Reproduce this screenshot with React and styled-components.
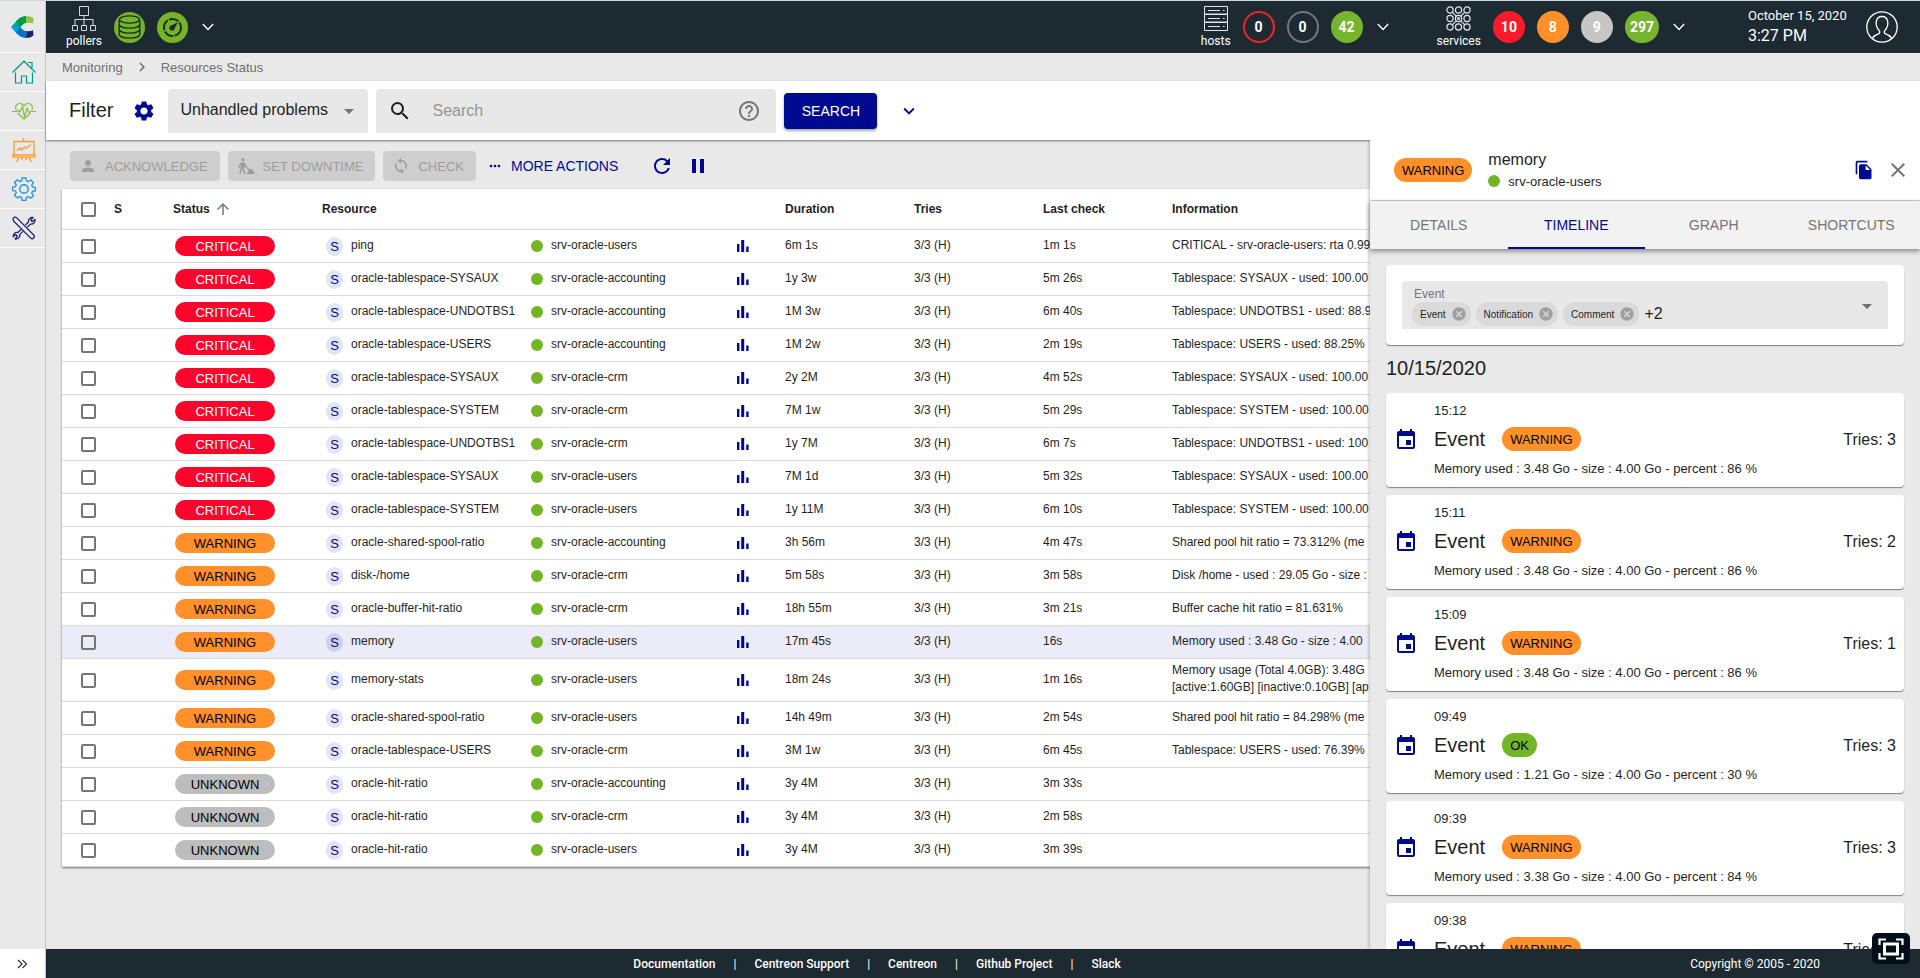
import { Fragment } from "react";
import styled, { createGlobalStyle, css } from "styled-components";
import {
  MdArrowDropDown,
  MdArrowUpward,
  MdCancel,
  MdChevronRight,
  MdClose,
  MdEvent,
  MdExpandMore,
  MdFileCopy,
  MdHelpOutline,
  MdMoreHoriz,
  MdPause,
  MdPerson,
  MdRefresh,
  MdSearch,
  MdSettings,
  MdSync,
} from "react-icons/md";

const NAVY = "#000a91";
const DARK = "#1e2a32";
const GREEN = "#74b526";

const statusColors = {
  CRITICAL: { bg: "#ff042b", fg: "#fff" },
  WARNING: { bg: "#ff902a", fg: "#000" },
  UNKNOWN: { bg: "#bdbdbd", fg: "#000" },
  OK: { bg: GREEN, fg: "#000" },
};

const resources = [
  ["CRITICAL", "ping", "srv-oracle-users", "6m 1s", "1m 1s", "CRITICAL - srv-oracle-users: rta 0.99"],
  ["CRITICAL", "oracle-tablespace-SYSAUX", "srv-oracle-accounting", "1y 3w", "5m 26s", "Tablespace: SYSAUX - used: 100.00"],
  ["CRITICAL", "oracle-tablespace-UNDOTBS1", "srv-oracle-accounting", "1M 3w", "6m 40s", "Tablespace: UNDOTBS1 - used: 88.9"],
  ["CRITICAL", "oracle-tablespace-USERS", "srv-oracle-accounting", "1M 2w", "2m 19s", "Tablespace: USERS - used: 88.25%"],
  ["CRITICAL", "oracle-tablespace-SYSAUX", "srv-oracle-crm", "2y 2M", "4m 52s", "Tablespace: SYSAUX - used: 100.00"],
  ["CRITICAL", "oracle-tablespace-SYSTEM", "srv-oracle-crm", "7M 1w", "5m 29s", "Tablespace: SYSTEM - used: 100.00"],
  ["CRITICAL", "oracle-tablespace-UNDOTBS1", "srv-oracle-crm", "1y 7M", "6m 7s", "Tablespace: UNDOTBS1 - used: 100"],
  ["CRITICAL", "oracle-tablespace-SYSAUX", "srv-oracle-users", "7M 1d", "5m 32s", "Tablespace: SYSAUX - used: 100.00"],
  ["CRITICAL", "oracle-tablespace-SYSTEM", "srv-oracle-users", "1y 11M", "6m 10s", "Tablespace: SYSTEM - used: 100.00"],
  ["WARNING", "oracle-shared-spool-ratio", "srv-oracle-accounting", "3h 56m", "4m 47s", "Shared pool hit ratio = 73.312% (me"],
  ["WARNING", "disk-/home", "srv-oracle-crm", "5m 58s", "3m 58s", "Disk /home - used : 29.05 Go - size :"],
  ["WARNING", "oracle-buffer-hit-ratio", "srv-oracle-crm", "18h 55m", "3m 21s", "Buffer cache hit ratio = 81.631%"],
  ["WARNING", "memory", "srv-oracle-users", "17m 45s", "16s", "Memory used : 3.48 Go - size : 4.00"],
  ["WARNING", "memory-stats", "srv-oracle-users", "18m 24s", "1m 16s", "Memory usage (Total 4.0GB): 3.48G\n[active:1.60GB] [inactive:0.10GB] [ap"],
  ["WARNING", "oracle-shared-spool-ratio", "srv-oracle-users", "14h 49m", "2m 54s", "Shared pool hit ratio = 84.298% (me"],
  ["WARNING", "oracle-tablespace-USERS", "srv-oracle-crm", "3M 1w", "6m 45s", "Tablespace: USERS - used: 76.39%"],
  ["UNKNOWN", "oracle-hit-ratio", "srv-oracle-accounting", "3y 4M", "3m 33s", ""],
  ["UNKNOWN", "oracle-hit-ratio", "srv-oracle-crm", "3y 4M", "2m 58s", ""],
  ["UNKNOWN", "oracle-hit-ratio", "srv-oracle-users", "3y 4M", "3m 39s", ""],
];

const events = [
  { time: "15:12", status: "WARNING", tries: 3, used: "3.48", percent: 86 },
  { time: "15:11", status: "WARNING", tries: 2, used: "3.48", percent: 86 },
  { time: "15:09", status: "WARNING", tries: 1, used: "3.48", percent: 86 },
  { time: "09:49", status: "OK", tries: 3, used: "1.21", percent: 30 },
  { time: "09:39", status: "WARNING", tries: 3, used: "3.38", percent: 84 },
  { time: "09:38", status: "WARNING", tries: 2, used: "3.38", percent: 84 },
];

const GlobalStyle = createGlobalStyle`
  * {
    box-sizing: border-box;
  }

  body {
    margin: 0;
    font-family: "Liberation Sans", Arial, sans-serif;
    color: #1f1f1f;
    background: #e9e9e9;
  }

  button, input, select {
    margin: 0;
    font-family: inherit;
  }

  svg {
    flex-shrink: 0;
  }
`;

const bareButton = css`
  display: flex;
  align-items: center;
  justify-content: center;
  padding: 0;
  border: none;
  background: none;
  color: ${(props) => props.$color || "inherit"};
  cursor: pointer;
`;

const Layout = styled.div`
  display: flex;
  height: 100vh;
  border-top: 1px solid #cdd6db;
  overflow: hidden;
`;

/* ---------- sidebar ---------- */

const Sidebar = styled.nav`
  display: flex;
  flex-direction: column;
  width: 46px;
  flex-shrink: 0;
  border-right: 1px solid #c6c6c6;
  background: #e9e9e9;
`;

const Logo = styled.a`
  display: flex;
  align-items: center;
  justify-content: center;
  height: 52px;
  border-bottom: 1px solid #fff;
`;

const MenuLink = styled.a`
  display: flex;
  align-items: center;
  justify-content: center;
  height: 39px;
  padding-left: 2px;
  border-bottom: 1px solid #fff;
  color: ${(props) => props.$color};
`;

const ExpandButton = styled.button`
  ${bareButton}
  height: 29px;
  margin-top: auto;
  background: #fff;
`;

/* ---------- header ---------- */

const Page = styled.div`
  display: flex;
  flex-direction: column;
  flex: 1;
  min-width: 0;
`;

const Header = styled.header`
  display: flex;
  align-items: center;
  height: 52px;
  flex-shrink: 0;
  padding: 0 22px 0 20px;
  background: ${DARK};
  color: #fff;
  font-family: Roboto, sans-serif;
`;

const HeaderGroup = styled.div`
  display: flex;
  align-items: center;
  gap: 12px;
  margin-left: ${(props) => props.$push || "0"};
`;

const HeaderLabel = styled.a`
  display: flex;
  flex-direction: column;
  align-items: center;
  gap: 3px;
  font-size: 12px;
  line-height: 14px;
  color: #fff;
  text-decoration: none;
`;

const PollerBadges = styled.div`
  display: flex;
  align-items: center;
  gap: 12px;
`;

const Counter = styled.a`
  display: flex;
  align-items: center;
  justify-content: center;
  min-width: 32px;
  height: 32px;
  padding: 0 3px;
  border: 2px solid ${(props) => props.$color};
  border-radius: 17px;
  background: ${(props) => (props.$outlined ? "transparent" : props.$color)};
  font-size: 14px;
  font-weight: bold;
  color: #fff;
  text-decoration: none;
`;

const ChevronButton = styled.button`
  ${bareButton}
  width: 16px;
  height: 24px;
`;

const Clock = styled.div`
  display: flex;
  flex-direction: column;
  margin-left: 61px;
  width: 118px;
  font-size: 13px;
  line-height: 18px;

  strong {
    font-size: 16px;
    font-weight: normal;
    line-height: 22px;
  }
`;

const UserButton = styled.button`
  ${bareButton}
`;

/* ---------- breadcrumb + filters ---------- */

const Breadcrumb = styled.nav`
  display: flex;
  align-items: center;
  gap: 10px;
  height: 28px;
  flex-shrink: 0;
  padding: 0 16px;
  font-size: 13px;
  color: #6f6f6f;

  a {
    color: inherit;
    text-decoration: none;
  }
`;

const FilterBar = styled.form`
  position: relative;
  z-index: 1;
  display: flex;
  align-items: center;
  gap: 8px;
  height: 59px;
  flex-shrink: 0;
  padding: 0 23px;
  background: #fff;
  box-shadow: 0 1px 2px rgba(0, 0, 0, 0.5);
`;

const FilterTitle = styled.h1`
  margin: 0 7px 0 0;
  font-size: 20px;
  font-weight: normal;
`;

const IconButton = styled.button`
  ${bareButton}
  width: ${(props) => props.$size || 24}px;
  height: ${(props) => props.$size || 24}px;
`;

const SelectBox = styled.label`
  display: flex;
  align-items: center;
  width: 200px;
  height: 44px;
  padding-right: 7px;
  border-radius: 4px 4px 0 0;
  background: #e8e8e8;
  color: #757575;

  select {
    flex: 1;
    min-width: 0;
    height: 100%;
    padding: 0 0 2px 12px;
    border: none;
    background: none;
    appearance: none;
    font-size: 16px;
    color: #1f1f1f;
  }
`;

const SearchBox = styled.label`
  display: flex;
  align-items: center;
  gap: 20px;
  width: 400px;
  height: 44px;
  padding: 0 15px 0 12px;
  border-radius: 4px 4px 0 0;
  background: #e8e8e8;

  input {
    flex: 1;
    min-width: 0;
    padding: 0;
    border: none;
    outline: none;
    background: none;
    font-size: 16px;
  }

  input::placeholder {
    color: #959595;
  }
`;

const SearchButton = styled.button`
  width: 93px;
  height: 36px;
  border: none;
  border-radius: 4px;
  background: ${NAVY};
  box-shadow: 0 2px 3px rgba(0, 0, 0, 0.35);
  font-size: 14px;
  font-weight: 500;
  color: #fff;
`;

/* ---------- listing ---------- */

const Main = styled.main`
  position: relative;
  flex: 1;
  min-height: 0;
  overflow: hidden;
`;

const Listing = styled.section`
  padding: 11px 16px 0;
`;

const Actions = styled.div`
  display: flex;
  align-items: center;
  gap: 8px;
  height: 30px;
  margin: 0 0 8px 8px;
`;

const ActionButton = styled.button`
  display: flex;
  align-items: center;
  gap: 8px;
  height: 30px;
  padding: 0 12px 0 9px;
  border: none;
  border-radius: 4px;
  background: #cecece;
  font-size: 13px;
  color: #9d9d9d;
`;

const MoreButton = styled.button`
  ${bareButton}
  gap: 8px;
  margin: 0 24px 0 3px;
  font-size: 14px;
  color: ${NAVY};
`;

const IconGroup = styled.div`
  display: flex;
  gap: ${(props) => props.$gap}px;
`;

const Table = styled.table`
  width: 100%;
  table-layout: fixed;
  border-collapse: separate;
  border-spacing: 0;
  background: #fff;
  box-shadow: 0 1px 2px rgba(0, 0, 0, 0.5);
  font-size: 12px;

  th,
  td {
    padding: 0;
    border-bottom: 1px solid #d9d9d9;
    text-align: left;
    white-space: nowrap;
  }

  th {
    height: 41px;
  }
`;

const Row = styled.tr`
  background: ${(props) => (props.$selected ? "#ebecf7" : "#fff")};

  td {
    height: 33px;
  }
`;

const CellText = styled.div`
  padding-bottom: 2px;
`;

const Checkbox = styled.input`
  display: block;
  width: 15px;
  height: 15px;
  margin: 1px 0 0 19px;
  border: 2px solid #757575;
  border-radius: 2px;
  appearance: none;
`;

const SortButton = styled.button`
  ${bareButton}
  gap: 4px;
  font-size: 12px;
  font-weight: bold;

  svg {
    color: #757575;
  }
`;

const Chip = styled.span`
  display: inline-flex;
  align-items: center;
  justify-content: center;
  width: ${(props) => (props.$wide ? "100px" : "auto")};
  height: ${(props) => (props.$wide ? 20 : 24)}px;
  margin-left: ${(props) => (props.$wide ? 2 : 0)}px;
  padding: 0 8px;
  border-radius: 12px;
  background: ${(props) => statusColors[props.$status].bg};
  color: ${(props) => statusColors[props.$status].fg};
  font-size: 13px;
`;

const CenteredCell = styled.div`
  display: flex;
  align-items: center;
`;

const ServiceBadge = styled.span`
  display: flex;
  align-items: center;
  justify-content: center;
  width: 17px;
  height: 19px;
  margin: 0 8px 0 4px;
  border-radius: 50%;
  background: ${(props) => (props.$selected ? "#cdd0ea" : "#e2e4f4")};
  font-size: 13px;
  color: ${NAVY};
`;

const Dot = styled.span`
  width: 12px;
  height: 12px;
  margin-right: 8px;
  border-radius: 50%;
  background: ${GREEN};
`;

const Information = styled.div`
  padding: 3px 0 5px;
  line-height: 17px;
  white-space: pre;
`;

/* ---------- details drawer ---------- */

const Drawer = styled.aside`
  position: absolute;
  top: 0;
  right: 0;
  bottom: 0;
  z-index: 2;
  display: flex;
  flex-direction: column;
  width: 550px;
  background: #e9e9e9;
  box-shadow: -1px 0 3px rgba(0, 0, 0, 0.25);
`;

const DrawerHeader = styled.div`
  display: flex;
  align-items: center;
  gap: 16px;
  height: 61px;
  flex-shrink: 0;
  padding: 0 10px 0 24px;
  border-bottom: 1px solid #cfcfcf;
  background: #fff;
`;

const DrawerTitle = styled.div`
  flex: 1;

  h2 {
    margin: 0;
    font-size: 16px;
    font-weight: normal;
    line-height: 22px;
  }
`;

const DrawerParent = styled.div`
  display: flex;
  align-items: center;
  font-size: 13px;
  line-height: 21px;
`;

const Tabs = styled.div`
  display: grid;
  grid-template-columns: repeat(4, 1fr);
  height: 48px;
  flex-shrink: 0;
  background: #f2f2f2;
  box-shadow: 0 2px 5px rgba(0, 0, 0, 0.45);
`;

const Tab = styled.button`
  padding: 2px 0 0;
  border: none;
  border-bottom: 2px solid ${(props) => (props.$active ? NAVY : "transparent")};
  background: none;
  font-size: 14px;
  color: ${(props) => (props.$active ? NAVY : "#757575")};
`;

const Timeline = styled.div`
  display: flex;
  flex-direction: column;
  gap: 8px;
  flex: 1;
  min-height: 0;
  padding: 16px 16px 0;
  overflow: hidden;
`;

const Card = styled.article`
  flex-shrink: 0;
  border-radius: 4px;
  background: #fff;
  box-shadow: 0 1px 1px rgba(0, 0, 0, 0.45);
`;

const FilterCard = styled(Card)`
  padding: 16px;
`;

const EventFilter = styled.div`
  display: flex;
  align-items: center;
  justify-content: space-between;
  height: 48px;
  padding: 2px 9px 0 10px;
  border-radius: 4px 4px 0 0;
  background: #e8e8e8;
  color: #757575;
`;

const EventFilterLabel = styled.div`
  padding-left: 2px;
  font-size: 12px;
  line-height: 16px;
`;

const ChipList = styled.div`
  display: flex;
  align-items: center;
  gap: 5px;
  font-size: 16px;
  color: #1f1f1f;
`;

const FilterChip = styled.span`
  display: flex;
  align-items: center;
  gap: 5px;
  height: 24px;
  padding: 0 4px 0 8px;
  border-radius: 12px;
  background: #dadada;
  font-size: 10px;
`;

const DayTitle = styled.h3`
  margin: 0;
  padding: 4px 0 5px;
  font-size: 20px;
  font-weight: normal;
  line-height: 23px;
`;

const EventCard = styled(Card)`
  display: grid;
  grid-template-columns: 40px 1fr auto;
  align-items: center;
  height: 94px;
  padding: 4px 8px;
  color: ${NAVY};
`;

const EventBody = styled.div`
  display: grid;
  grid-template-rows: 26px 32px 26px;
  align-items: center;
  padding-bottom: 2px;
  font-size: 13px;
  color: #1f1f1f;
`;

const EventTitle = styled.div`
  display: flex;
  align-items: center;
  gap: 17px;
  font-size: 20px;
`;

const Tries = styled.div`
  font-size: 16px;
  color: #1f1f1f;
`;

/* ---------- footer ---------- */

const Footer = styled.footer`
  display: flex;
  align-items: center;
  height: 29px;
  flex-shrink: 0;
  padding: 1px 100px 0 18px;
  background: ${DARK};
  color: #fff;
  font-family: Roboto, sans-serif;
  font-size: 12px;
`;

const FooterLinks = styled.div`
  display: flex;
  justify-content: center;
  gap: 18px;
  flex: 1;

  a {
    font-weight: 500;
    color: inherit;
    text-decoration: none;
  }
`;

const FullscreenButton = styled.button`
  ${bareButton}
  position: fixed;
  right: 10px;
  bottom: 14px;
  z-index: 3;
  width: 38px;
  height: 31px;
  border-radius: 5px;
  background: #040e18;
  color: #fff;
`;

/* ---------- drawings ---------- */

const LogoIcon = () => (
  <svg width="23" height="22" viewBox="0 0 23 22">
    <path d="M0 11 6 4.5l6 3.2L9.5 11z" fill="#00a3a0" />
    <path d="M5 5.5C7.500 2 11 .2 15 0l.5 7c-2.500.2-4.500 1.500-6 4z" fill="#009a44" />
    <path d="M15 0c3 0 5.500.8 7.500 2.300L22 7.500c-2-.8-4-.9-6.500-.5z" fill="#8cc63f" />
    <path d="M0 11h9.500l1.500 5-5.500 1.500z" fill="#009fdf" />
    <path d="M5 16.500 9.500 11c1.200 2.500 3.200 3.800 6 4L15 22c-4-.2-7.500-2-10-5.500z" fill="#0072ce" />
    <path d="M15 22l.5-7c2.500.3 4.500.2 6.500-.8l.5 5.300C20.500 21.200 18 22 15 22z" fill="#1e2171" />
  </svg>
);

const HomeIcon = () => (
  <svg width="24" height="24" viewBox="0 0 24 24" fill="none" stroke="currentColor" strokeWidth="1.2">
    <path d="M.5 12.5 12 1.2l11.500 11.300M16 2.500h4v5.500M3.500 12.500v10.500h6v-7h5v7h6V12.500" />
  </svg>
);

const HeartIcon = () => (
  <svg width="24" height="24" viewBox="0 0 24 24" fill="none" stroke="currentColor" strokeWidth="1.2" strokeLinejoin="round">
    <path d="M0 12.500h4.500l1.500-1.200 2 1.700 2.500-5.500 2 10.500 2.500-9 2 4.500 1.500-1h5.500" />
    <path d="M4 11C2.500 7 5 4.300 8.200 4.500c1.800.1 3.200 1.300 3.800 2.600.6-1.300 2-2.500 3.800-2.600C19 4.300 21.500 7 20 11M5.500 14 12 20l6.500-6" />
  </svg>
);

const BoardIcon = () => (
  <svg width="24" height="24" viewBox="0 0 24 24" fill="none" stroke="currentColor" strokeWidth="1.3">
    <path d="M2 3.500h20v13.500H2zM1 17h22v2.200H1zM11.500 0v3.500M7 19.200 4.500 24M17 19.200l2.500 4.800M10.500 19.200 9.500 22M13.500 19.200l1 2.800" />
    <path d="m5 12.500 3-2.500 1.500 2 3-3 1.500 1.500 5-4" />
  </svg>
);

const CogIcon = () => (
  <svg width="24" height="24" viewBox="0 0 24 24" fill="none" stroke="currentColor" strokeWidth="1.4" strokeLinejoin="round">
    <path
      d="M10 .8h4l.6 3.200 2 .8 2.700-1.800 2.800 2.800-1.900 2.600.9 2 3.100.6v3.400l-3.100.6-.9 2 1.900 2.600-2.800 2.800-2.700-1.800-2 .8-.6 3.200h-4l-.6-3.200-2-.8L4.700 22 1.900 19.200l1.900-2.600-.9-2L-.2 14.200v-3.600l3.100-.6.9-2L1.900 5.600 4.700 2.800l2.700 1.800 2-.8z"
      transform="translate(.7 .2) scale(.94)"
    />
    <circle cx="12" cy="12" r="4.2" />
  </svg>
);

const ToolsIcon = () => (
  <svg width="24" height="24" viewBox="0 0 24 24" fill="none" stroke="currentColor" strokeWidth="1.3" strokeLinejoin="round">
    <path d="M1 3.200C1 1.500 3 .5 4.500 1.600L22 19.200c1.200 2-1 4.300-3 3.200L1.800 5.200z" />
    <path d="m13.500 9 3-3c-.6-2.500 1.600-5 4.500-4.500L18.800 4l1.400 1.600L23 3.500c.5 3-2 5-4.500 4.600l-3 2.900M9 13.500l-3.200 3c-2.500-.6-5 1.500-4.600 4.300L3.500 18.500l1.800 1.600L3.200 23c3 .4 5-2 4.600-4.600l3.200-3" />
  </svg>
);

const DoubleChevronIcon = () => (
  <svg width="11" height="10" viewBox="0 0 11 10" fill="none" stroke="#333" strokeWidth="1.2">
    <path d="m1 1 4 4-4 4M5.500 1l4 4-4 4" />
  </svg>
);

const PollersIcon = () => (
  <svg width="24" height="25" viewBox="0 0 24 25" fill="none" stroke="#d5d8da">
    <path d="M7.500.5h9v9h-9zM12 9.500v10M3 19.500v-6h18v6M.5 19.500h5v5h-5zM9.500 19.500h5v5h-5zM18.500 19.500h5v5h-5z" />
  </svg>
);

const DatabaseIcon = () => (
  <svg width="31" height="31" viewBox="0 0 31 31">
    <circle cx="15.5" cy="15.5" r="15.5" fill={GREEN} />
    <g fill="none" stroke={DARK} strokeWidth="1.4">
      <ellipse cx="15.5" cy="7.5" rx="10" ry="3.6" />
      <path d="M5 12c0 5.500 21 5.500 21 0M5 17c0 5.500 21 5.500 21 0M5 22c0 5.500 21 5.500 21 0M5.200 8v14.500M25.800 8v14.500" />
    </g>
  </svg>
);

const GaugeIcon = () => (
  <svg width="31" height="31" viewBox="0 0 31 31">
    <circle cx="15.5" cy="15.5" r="15.5" fill={GREEN} />
    <circle cx="15.5" cy="15.5" r="8.5" fill="none" stroke={DARK} strokeWidth="2" strokeDasharray="11 1.4 10 1.4" />
    <path d="m13.500 14 7.500-4-4 7.500z" fill={DARK} />
    <circle cx="15" cy="16" r="2.6" fill={DARK} />
  </svg>
);

const HostsIcon = () => (
  <svg width="24" height="25" viewBox="0 0 24 25" fill="none" stroke="#e3e5e6">
    <path d="M.5.5h23v7.500H.5zM.5 8.500h23v7.500H.5zM.5 16.500h23v8H.5zM4 4.500h12M4 12.500h12M4 20.500h12M19 4.500h1.500M19 12.500h1.500M19 20.500h1.500" />
  </svg>
);

const ServicesIcon = () => (
  <svg width="25" height="25" viewBox="0 0 25 25" fill="none" stroke="#e3e5e6" strokeWidth="1.2">
    {[4, 12.5, 21].map((cy) =>
      [4, 12.5, 21].map((cx) => <circle key={`${cx}-${cy}`} cx={cx} cy={cy} r="3.1" />)
    )}
    <circle cx="12.5" cy="12.5" r="1" />
    <path d="m6.200 6.200 4 4M18.800 6.200l-4 4M6.200 18.800l4-4M18.800 18.800l-4-4" />
  </svg>
);

const ThinChevron = () => (
  <svg width="12" height="8" viewBox="0 0 12 8" fill="none" stroke="#fff" strokeWidth="1.3">
    <path d="m.8 1 5.200 5.500L11.200 1" />
  </svg>
);

const UserIcon = () => (
  <svg width="32" height="32" viewBox="0 0 32 32" fill="none" stroke="#fff" strokeWidth="1.3">
    <circle cx="16" cy="16" r="15.2" />
    <path d="M6.500 28c.5-3 2.500-3.800 6-5.200 1.500-.6 1.500-2.300.6-3.300-4.500-5-4-14 2.900-14s7.400 9 2.900 14c-.9 1-.9 2.700.6 3.300 3.500 1.400 5.500 2.200 6 5.200" />
  </svg>
);

const DowntimeIcon = () => (
  <svg width="18" height="18" viewBox="0 0 24 24" fill="currentColor">
    <circle cx="8" cy="3.5" r="2.2" />
    <path d="M5 7.500 8.500 6.500l2.500 2 1.500 4.500 8 6-1 1.200-8.500-6.200-1.500-1.500-.8 3 1.800 2.500.5 4.500H9l-.6-3.800-2.200-2.500L5 22.500H3l1.500-7.500.8-4.500-1.200 1-.5 3.500H2l.5-4.500z" />
    <path d="M13 22.500c.5-2.500 1.500-3 2.500-5l2-1.500h2l1.500 1.500c1 2 2.500 2.500 3 5z" />
  </svg>
);

const GraphIcon = () => (
  <svg width="12" height="12" viewBox="0 0 12 12" fill="currentColor">
    <path d="M0 4h2.400v8H0zM4.200 0h3v12h-3zM9.200 6.500h2.400V12H9.200z" />
  </svg>
);

const FullscreenIcon = () => (
  <svg width="26" height="22" viewBox="0 0 26 22" fill="none" stroke="currentColor" strokeWidth="2.2">
    <path d="M1.500 7V1.500H8M18 1.500h6.500V7M24.500 15v5.500H18M8 20.500H1.500V15" />
    <rect x="6.500" y="6" width="13" height="10" strokeWidth="3" />
  </svg>
);

const StatusChip = ({ status, wide }) => (
  <Chip $status={status} $wide={wide}>
    {status}
  </Chip>
);

function SideMenu() {
  return (
    <Sidebar>
      <Logo href="#home" aria-label="Centreon"><LogoIcon /></Logo>
      <MenuLink href="#home" aria-label="Home" $color="#009688"><HomeIcon /></MenuLink>
      <MenuLink href="#monitoring" aria-label="Monitoring" $color="#85b93e"><HeartIcon /></MenuLink>
      <MenuLink href="#reporting" aria-label="Reporting" $color="#ff9a26"><BoardIcon /></MenuLink>
      <MenuLink href="#configuration" aria-label="Configuration" $color="#1997e0"><CogIcon /></MenuLink>
      <MenuLink href="#administration" aria-label="Administration" $color="#20246f"><ToolsIcon /></MenuLink>
      <ExpandButton aria-label="Expand menu"><DoubleChevronIcon /></ExpandButton>
    </Sidebar>
  );
}

function TopBar() {
  return (
    <Header>
      <HeaderGroup>
        <HeaderLabel href="#pollers"><PollersIcon />pollers</HeaderLabel>
        <PollerBadges>
          <DatabaseIcon />
          <GaugeIcon />
          <ChevronButton aria-label="Pollers details"><ThinChevron /></ChevronButton>
        </PollerBadges>
      </HeaderGroup>
      <HeaderGroup $push="auto">
        <HeaderLabel href="#hosts"><HostsIcon />hosts</HeaderLabel>
        <Counter href="#down" $color="#f5222d" $outlined>0</Counter>
        <Counter href="#unreachable" $color="#77777b" $outlined>0</Counter>
        <Counter href="#up" $color="#78b52f">42</Counter>
        <ChevronButton aria-label="Hosts details"><ThinChevron /></ChevronButton>
      </HeaderGroup>
      <HeaderGroup $push="46px">
        <HeaderLabel href="#services"><ServicesIcon />services</HeaderLabel>
        <Counter href="#critical" $color="#fb1a2c">10</Counter>
        <Counter href="#warning" $color="#ff902a">8</Counter>
        <Counter href="#unknown" $color="#c6c6c6">9</Counter>
        <Counter href="#ok" $color="#78b52f">297</Counter>
        <ChevronButton aria-label="Services details"><ThinChevron /></ChevronButton>
      </HeaderGroup>
      <Clock>
        October 15, 2020
        <strong>3:27 PM</strong>
      </Clock>
      <UserButton aria-label="Profile"><UserIcon /></UserButton>
    </Header>
  );
}

function Filters() {
  return (
    <FilterBar>
      <FilterTitle>Filter</FilterTitle>
      <IconButton type="button" aria-label="Edit filters" $size={32} $color={NAVY}><MdSettings size={24} /></IconButton>
      <SelectBox>
        <select aria-label="Filter" defaultValue="Unhandled problems">
          <option>Unhandled problems</option>
        </select>
        <MdArrowDropDown size={24} />
      </SelectBox>
      <SearchBox>
        <MdSearch size={24} />
        <input type="text" placeholder="Search" aria-label="Search" />
        <IconButton type="button" aria-label="Search help" $color="#757575"><MdHelpOutline size={24} /></IconButton>
      </SearchBox>
      <SearchButton type="button">SEARCH</SearchButton>
      <IconButton type="button" aria-label="Show criterias" $size={48} $color={NAVY}><MdExpandMore size={22} /></IconButton>
    </FilterBar>
  );
}

function ResourceTable() {
  return (
    <Table>
      <colgroup>
        <col width="52" />
        <col width="59" />
        <col width="149" />
        <col width="209" />
        <col width="206" />
        <col width="48" />
        <col width="129" />
        <col width="129" />
        <col width="129" />
        <col />
      </colgroup>
      <thead>
        <tr>
          <th><Checkbox type="checkbox" aria-label="Select all" /></th>
          <th>S</th>
          <th><SortButton>Status <MdArrowUpward size={18} /></SortButton></th>
          <th>Resource</th>
          <th />
          <th />
          <th>Duration</th>
          <th>Tries</th>
          <th>Last check</th>
          <th>Information</th>
        </tr>
      </thead>
      <tbody>
        {resources.map(([status, name, parent, duration, lastCheck, information], index) => {
          const selected = name === "memory";
          return (
            <Row key={index} $selected={selected}>
              <td><Checkbox type="checkbox" aria-label={`Select ${name}`} /></td>
              <td />
              <td><CenteredCell><StatusChip status={status} wide /></CenteredCell></td>
              <td>
                <CenteredCell>
                  <ServiceBadge $selected={selected}>S</ServiceBadge>
                  <CellText>{name}</CellText>
                </CenteredCell>
              </td>
              <td><CenteredCell><Dot /><CellText>{parent}</CellText></CenteredCell></td>
              <td><IconButton aria-label="Graph" $size={12} $color={NAVY}><GraphIcon /></IconButton></td>
              <td><CellText>{duration}</CellText></td>
              <td><CellText>3/3 (H)</CellText></td>
              <td><CellText>{lastCheck}</CellText></td>
              <td><Information>{information}</Information></td>
            </Row>
          );
        })}
      </tbody>
    </Table>
  );
}

function Details() {
  return (
    <Drawer>
      <DrawerHeader>
        <StatusChip status="WARNING" />
        <DrawerTitle>
          <h2>memory</h2>
          <DrawerParent><Dot />srv-oracle-users</DrawerParent>
        </DrawerTitle>
        <IconGroup $gap={10}>
          <IconButton aria-label="Copy link" $color={NAVY}><MdFileCopy size={20} /></IconButton>
          <IconButton aria-label="Close" $color="#757575"><MdClose size={24} /></IconButton>
        </IconGroup>
      </DrawerHeader>
      <Tabs role="tablist">
        {["DETAILS", "TIMELINE", "GRAPH", "SHORTCUTS"].map((tab) => (
          <Tab key={tab} role="tab" aria-selected={tab === "TIMELINE"} $active={tab === "TIMELINE"}>
            {tab}
          </Tab>
        ))}
      </Tabs>
      <Timeline>
        <FilterCard>
          <EventFilter>
            <div>
              <EventFilterLabel>Event</EventFilterLabel>
              <ChipList>
                {["Event", "Notification", "Comment"].map((type) => (
                  <FilterChip key={type}>
                    {type}
                    <IconButton aria-label={`Remove ${type}`} $size={16} $color="#a0a0a0"><MdCancel size={16} /></IconButton>
                  </FilterChip>
                ))}
                +2
              </ChipList>
            </div>
            <IconButton aria-label="Open event types" $color="#6f6f6f"><MdArrowDropDown size={24} /></IconButton>
          </EventFilter>
        </FilterCard>
        <DayTitle>10/15/2020</DayTitle>
        {events.map((event) => (
          <EventCard key={event.time}>
            <MdEvent size={24} />
            <EventBody>
              <time>{event.time}</time>
              <EventTitle>Event <StatusChip status={event.status} /></EventTitle>
              <span>{`Memory used : ${event.used} Go - size : 4.00 Go - percent : ${event.percent} %`}</span>
            </EventBody>
            <Tries>Tries: {event.tries}</Tries>
          </EventCard>
        ))}
      </Timeline>
    </Drawer>
  );
}

export default function App() {
  return (
    <Layout>
      <GlobalStyle />
      <SideMenu />
      <Page>
        <TopBar />
        <Breadcrumb>
          <a href="#monitoring">Monitoring</a>
          <MdChevronRight size={18} />
          <a href="#resources">Resources Status</a>
        </Breadcrumb>
        <Filters />
        <Main>
          <Listing>
            <Actions>
              <ActionButton disabled><MdPerson size={18} />ACKNOWLEDGE</ActionButton>
              <ActionButton disabled><DowntimeIcon />SET DOWNTIME</ActionButton>
              <ActionButton disabled><MdSync size={18} />CHECK</ActionButton>
              <MoreButton><MdMoreHoriz size={16} />MORE ACTIONS</MoreButton>
              <IconGroup $gap={12}>
                <IconButton aria-label="Refresh" $color={NAVY}><MdRefresh size={24} /></IconButton>
                <IconButton aria-label="Pause" $color={NAVY}><MdPause size={24} /></IconButton>
              </IconGroup>
            </Actions>
            <ResourceTable />
          </Listing>
          <Details />
        </Main>
        <Footer>
          <FooterLinks>
            {["Documentation", "Centreon Support", "Centreon", "Github Project", "Slack"].map((link, index) => (
              <Fragment key={link}>
                {index > 0 && <span>|</span>}
                <a href={`#${link}`}>{link}</a>
              </Fragment>
            ))}
          </FooterLinks>
          Copyright © 2005 - 2020
        </Footer>
      </Page>
      <FullscreenButton aria-label="Fullscreen"><FullscreenIcon /></FullscreenButton>
    </Layout>
  );
}
